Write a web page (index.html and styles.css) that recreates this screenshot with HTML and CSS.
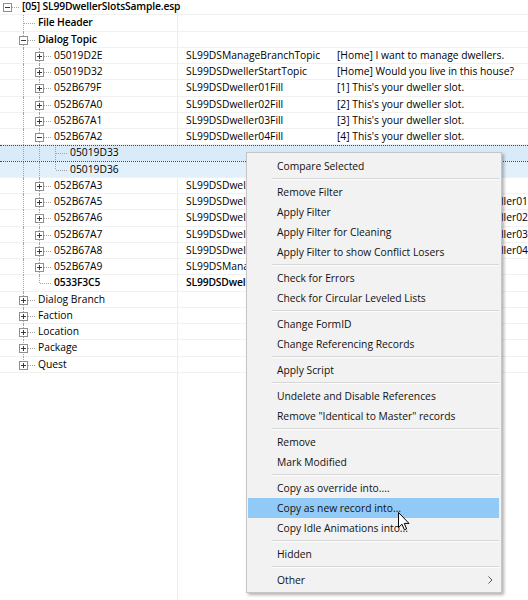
FILE: index.html
```html
<!DOCTYPE html>
<html>
<head>
<meta charset="utf-8">
<title>xEdit tree</title>
<link rel="stylesheet" href="styles.css">
</head>
<body>
<div class="view">
  <div class="tree">
    <div class="row bold">
      <div class="c1"><span class="g h"><i class="box minus"></i></span><span class="lbl">[05] SL99DwellerSlotsSample.esp</span></div>
      <div class="c2"></div><div class="c3"></div>
    </div>
    <div class="row bold">
      <div class="c1"><span class="g"></span><span class="g t"></span><span class="lbl">File Header</span></div>
      <div class="c2"></div><div class="c3"></div>
    </div>
    <div class="row bold">
      <div class="c1"><span class="g"></span><span class="g t"><i class="box minus"></i></span><span class="lbl">Dialog Topic</span></div>
      <div class="c2"></div><div class="c3"></div>
    </div>
    <div class="row">
      <div class="c1"><span class="g"></span><span class="g v"></span><span class="g t"><i class="box plus"></i></span><span class="lbl">05019D2E</span></div>
      <div class="c2">SL99DSManageBranchTopic</div><div class="c3">[Home] I want to manage dwellers.</div>
    </div>
    <div class="row">
      <div class="c1"><span class="g"></span><span class="g v"></span><span class="g t"><i class="box plus"></i></span><span class="lbl">05019D32</span></div>
      <div class="c2">SL99DSDwellerStartTopic</div><div class="c3">[Home] Would you live in this house?</div>
    </div>
    <div class="row">
      <div class="c1"><span class="g"></span><span class="g v"></span><span class="g t"><i class="box plus"></i></span><span class="lbl">052B679F</span></div>
      <div class="c2">SL99DSDweller01Fill</div><div class="c3">[1] This's your dweller slot.</div>
    </div>
    <div class="row">
      <div class="c1"><span class="g"></span><span class="g v"></span><span class="g t"><i class="box plus"></i></span><span class="lbl">052B67A0</span></div>
      <div class="c2">SL99DSDweller02Fill</div><div class="c3">[2] This's your dweller slot.</div>
    </div>
    <div class="row">
      <div class="c1"><span class="g"></span><span class="g v"></span><span class="g t"><i class="box plus"></i></span><span class="lbl">052B67A1</span></div>
      <div class="c2">SL99DSDweller03Fill</div><div class="c3">[3] This's your dweller slot.</div>
    </div>
    <div class="row">
      <div class="c1"><span class="g"></span><span class="g v"></span><span class="g t"><i class="box minus"></i></span><span class="lbl">052B67A2</span></div>
      <div class="c2">SL99DSDweller04Fill</div><div class="c3">[4] This's your dweller slot.</div>
    </div>
    <div class="row sel focus">
      <div class="c1"><span class="g"></span><span class="g v"></span><span class="g v"></span><span class="g t"></span><span class="lbl">05019D33</span></div>
      <div class="c2"></div><div class="c3"></div>
    </div>
    <div class="row sel">
      <div class="c1"><span class="g"></span><span class="g v"></span><span class="g v"></span><span class="g l"></span><span class="lbl">05019D36</span></div>
      <div class="c2"></div><div class="c3"></div>
    </div>
    <div class="row">
      <div class="c1"><span class="g"></span><span class="g v"></span><span class="g t"><i class="box plus"></i></span><span class="lbl">052B67A3</span></div>
      <div class="c2">SL99DSDwellerSlotTopic</div><div class="c3">[Home] Dwellers.</div>
    </div>
    <div class="row">
      <div class="c1"><span class="g"></span><span class="g v"></span><span class="g t"><i class="box plus"></i></span><span class="lbl">052B67A5</span></div>
      <div class="c2">SL99DSDweller01Topic</div><div class="c3"><span class="under">[Home] Show slot of SL99DSDwe</span>ller01</div>
    </div>
    <div class="row">
      <div class="c1"><span class="g"></span><span class="g v"></span><span class="g t"><i class="box plus"></i></span><span class="lbl">052B67A6</span></div>
      <div class="c2">SL99DSDweller02Topic</div><div class="c3"><span class="under">[Home] Show slot of SL99DSDwe</span>ller02</div>
    </div>
    <div class="row">
      <div class="c1"><span class="g"></span><span class="g v"></span><span class="g t"><i class="box plus"></i></span><span class="lbl">052B67A7</span></div>
      <div class="c2">SL99DSDweller03Topic</div><div class="c3"><span class="under">[Home] Show slot of SL99DSDwe</span>ller03</div>
    </div>
    <div class="row">
      <div class="c1"><span class="g"></span><span class="g v"></span><span class="g t"><i class="box plus"></i></span><span class="lbl">052B67A8</span></div>
      <div class="c2">SL99DSDweller04Topic</div><div class="c3"><span class="under">[Home] Show slot of SL99DSDwe</span>ller04</div>
    </div>
    <div class="row">
      <div class="c1"><span class="g"></span><span class="g v"></span><span class="g t"><i class="box plus"></i></span><span class="lbl">052B67A9</span></div>
      <div class="c2">SL99DSManageTopic</div><div class="c3">[Home] Manage.</div>
    </div>
    <div class="row bold">
      <div class="c1"><span class="g"></span><span class="g v"></span><span class="g l"></span><span class="lbl">0533F3C5</span></div>
      <div class="c2">SL99DSDwellerMenu</div><div class="c3"></div>
    </div>
    <div class="row">
      <div class="c1"><span class="g"></span><span class="g t"><i class="box plus"></i></span><span class="lbl">Dialog Branch</span></div>
      <div class="c2"></div><div class="c3"></div>
    </div>
    <div class="row">
      <div class="c1"><span class="g"></span><span class="g t"><i class="box plus"></i></span><span class="lbl">Faction</span></div>
      <div class="c2"></div><div class="c3"></div>
    </div>
    <div class="row">
      <div class="c1"><span class="g"></span><span class="g t"><i class="box plus"></i></span><span class="lbl">Location</span></div>
      <div class="c2"></div><div class="c3"></div>
    </div>
    <div class="row">
      <div class="c1"><span class="g"></span><span class="g t"><i class="box plus"></i></span><span class="lbl">Package</span></div>
      <div class="c2"></div><div class="c3"></div>
    </div>
    <div class="row">
      <div class="c1"><span class="g"></span><span class="g l"><i class="box plus"></i></span><span class="lbl">Quest</span></div>
      <div class="c2"></div><div class="c3"></div>
    </div>
  </div>

  <div class="menu">
    <div class="mi">Compare Selected</div>
    <div class="sep"></div>
    <div class="mi">Remove Filter</div>
    <div class="mi">Apply Filter</div>
    <div class="mi">Apply Filter for Cleaning</div>
    <div class="mi">Apply Filter to show Conflict Losers</div>
    <div class="sep"></div>
    <div class="mi">Check for Errors</div>
    <div class="mi">Check for Circular Leveled Lists</div>
    <div class="sep"></div>
    <div class="mi">Change FormID</div>
    <div class="mi">Change Referencing Records</div>
    <div class="sep"></div>
    <div class="mi">Apply Script</div>
    <div class="sep"></div>
    <div class="mi">Undelete and Disable References</div>
    <div class="mi">Remove "Identical to Master" records</div>
    <div class="sep"></div>
    <div class="mi">Remove</div>
    <div class="mi">Mark Modified</div>
    <div class="sep"></div>
    <div class="mi">Copy as override into....</div>
    <div class="mi hot">Copy as new record into...</div>
    <div class="mi">Copy Idle Animations into...</div>
    <div class="sep"></div>
    <div class="mi">Hidden</div>
    <div class="sep"></div>
    <div class="mi sub">Other<svg class="chev" width="5" height="8" viewBox="0 0 5 8"><path d="M0.5 0.5 L4 4 L0.5 7.5" fill="none" stroke="#555" stroke-width="1"/></svg></div>
  </div>

  <svg class="cursor" width="13" height="20" viewBox="0 0 13 20">
    <path d="M0.5 0.5 L0.5 15.5 L4 12.2 L6.4 17.8 L8.6 16.9 L6.3 11.4 L11 11.4 Z" fill="#fff" stroke="#000" stroke-width="1" stroke-linejoin="miter"/>
  </svg>
</div>
</body>
</html>
```

FILE: styles.css
```css
html, body {
  margin: 0;
  padding: 0;
  background: #fff;
  overflow: hidden;
}

.view {
  position: relative;
  width: 528px;
  height: 600px;
  overflow: hidden;
  font-family: "Open Sans", "Noto Sans", sans-serif;
  font-size: 10.3px;
  color: #000;
  background:
    linear-gradient(to right, transparent 177px, #ececec 177px, #ececec 178px, transparent 178px);
}

.tree {
  margin-top: -1px;
}

.row {
  position: relative;
  display: grid;
  grid-template-columns: 178px 152px 1fr;
  height: 16.25px;
  box-sizing: border-box;
  border-bottom: 1px solid #f1f1f1;
  line-height: 15px;
  white-space: nowrap;
}

.row.bold {
  font-weight: 600;
  letter-spacing: -0.15px;
}

.row.sel {
  background: #d9ebf9;
}

.row.sel + .row.sel {
  background: #e2f0fb;
}

.row.focus::after {
  content: "";
  position: absolute;
  left: 0;
  right: 0;
  top: 0;
  bottom: -1px;
  border-top: 1px dotted #4a4a4a;
  border-bottom: 1px dotted #4a4a4a;
  pointer-events: none;
}

.c1 {
  display: flex;
  align-items: stretch;
  min-width: 0;
}

.c2 {
  padding-left: 8px;
  overflow: hidden;
}

.c3 {
  padding-left: 7px;
  overflow: hidden;
}

.lbl {
  margin-left: 6px;
  white-space: nowrap;
}

.g {
  position: relative;
  flex: none;
  width: 16px;
}

.g.v::before,
.g.t::before,
.g.l::before {
  content: "";
  position: absolute;
  left: 7px;
  top: 0;
  bottom: -1px;
  border-left: 1px dotted #a3a3a3;
}

.g.l::before {
  bottom: 50%;
}

.g.t::after,
.g.l::after,
.g.h::after {
  content: "";
  position: absolute;
  left: 8px;
  top: 8px;
  width: 11px;
  border-top: 1px dotted #a3a3a3;
}

.box {
  position: absolute;
  z-index: 1;
  left: 3px;
  top: 4px;
  width: 9px;
  height: 9px;
  box-sizing: border-box;
  border: 1px solid #8f8f8f;
  background: #fff;
}

.box::before {
  content: "";
  position: absolute;
  left: 1px;
  top: 3px;
  width: 5px;
  height: 1px;
  background: #3a3a3a;
}

.box.plus::after {
  content: "";
  position: absolute;
  left: 3px;
  top: 1px;
  width: 1px;
  height: 5px;
  background: #3a3a3a;
}

.under {
  display: inline-block;
  width: 164px;
  overflow: hidden;
  vertical-align: top;
}

/* context menu */
.menu {
  position: absolute;
  left: 246px;
  top: 152px;
  width: 256px;
  box-sizing: border-box;
  border: 1px solid #c6c6c6;
  background: #f2f2f2;
  padding: 3px 2px 2px 1px;
  box-shadow: 2px 2px 3px rgba(0, 0, 0, 0.3);
  font-size: 10.3px;
  color: #111;
}

.mi {
  position: relative;
  height: 20px;
  line-height: 20px;
  padding-left: 29px;
  white-space: nowrap;
}

.mi.hot {
  background: #91c9f7;
}

.chev {
  position: absolute;
  left: 240px;
  top: 6px;
}

.sep {
  position: relative;
  height: 6px;
  margin-left: 24px;
}

.sep::before {
  content: "";
  position: absolute;
  left: 0;
  right: 0;
  top: 2px;
  height: 1px;
  background: #d7d7d7;
}

.sep::after {
  content: "";
  position: absolute;
  left: 0;
  right: 0;
  top: 3px;
  height: 1px;
  background: #fbfbfb;
}

.cursor {
  position: absolute;
  left: 398px;
  top: 512px;
}
```
